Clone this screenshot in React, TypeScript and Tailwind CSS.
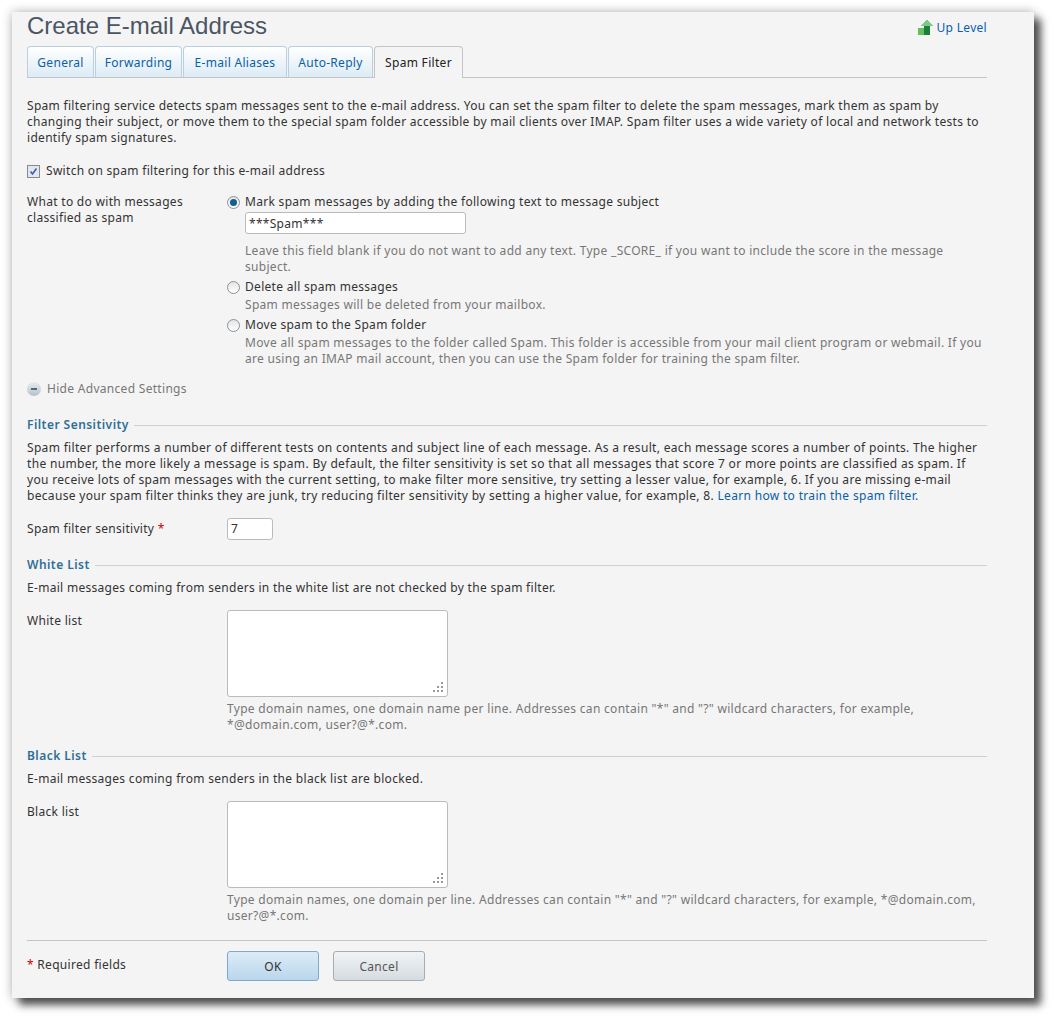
import React from "react";

const tabs = [
  { label: "General", width: "w-[67px]" },
  { label: "Forwarding", width: "w-[87px]" },
  { label: "E-mail Aliases", width: "w-[104px]" },
  { label: "Auto-Reply", width: "w-[85px]" },
];

const Section = ({ title }: { title: string }) => (
  <div className="flex items-center gap-[5px] h-4">
    <span className="font-semibold tracking-[0.45px] text-[#2f6f96]">{title}</span>
    <div className="flex-1 h-px bg-[#d0d0d0]" />
  </div>
);

const Radio = ({ checked }: { checked?: boolean }) => (
  <span className="w-[13px] h-[13px] rounded-full border border-[#8a9299] bg-gradient-to-b from-[#e4e4e4] to-white flex items-center justify-center shrink-0">
    {checked && <span className="w-[7px] h-[7px] rounded-full bg-[#0f5f8f]" />}
  </span>
);

const ListField = ({ label, help }: { label: string; help: string }) => (
  <div className="flex mt-[14px]">
    <div className="w-[200px] pt-[3px]">{label}</div>
    <div className="flex-1">
      <div className="relative w-[221px] h-[87px] bg-white border border-[#bbbbbb] rounded-[3px]">
        <svg className="absolute right-[3px] bottom-[3px]" width="11" height="11" viewBox="0 0 11 11" fill="#999">
          <rect x="8" y="0" width="2" height="2" />
          <rect x="4" y="4" width="2" height="2" />
          <rect x="8" y="4" width="2" height="2" />
          <rect x="0" y="8" width="2" height="2" />
          <rect x="4" y="8" width="2" height="2" />
          <rect x="8" y="8" width="2" height="2" />
        </svg>
      </div>
      <p className="mt-[4px] text-[#777777]">{help}</p>
    </div>
  </div>
);

export default function App() {
  return (
    <div className="bg-white w-[1054px] h-[1018px] pt-3 pl-3 font-['Noto_Sans','DejaVu_Sans',sans-serif] text-[12px] leading-4 tracking-[0.3px] text-[#333333]">
      <div className="w-[1022px] h-[986px] bg-[#f4f4f4] pl-[15px] pr-[47px] shadow-[7px_7px_8px_rgba(0,0,0,0.65),0_0_10px_rgba(0,0,0,0.3)] overflow-hidden">
        {/* Title row */}
        <div className="flex justify-between h-[34px]">
          <h1 className="font-['Liberation_Sans',sans-serif] text-[24px] leading-7 tracking-normal text-[#4b5563]">Create E-mail Address</h1>
          <a className="flex items-center gap-[3px] h-[16px] mt-[8px] text-[#0a5fb4]">
            <svg width="16" height="16" viewBox="0 0 16 16">
              <rect x="0" y="8" width="7" height="7" fill="#62c05e" />
              <path d="M9 0 L15 6 L12 6 L12 15 L6 15 L6 6 L3 6 Z" fill="#1a7f37" />
              <path d="M9 0 L15 6 L3 6 Z" fill="#7cc98a" />
            </svg>
            Up Level
          </a>
        </div>

        {/* Tabs */}
        <div className="flex items-end gap-px h-[32px] border-b border-[#c4c4c4]">
          {tabs.map((t) => (
            <div
              key={t.label}
              className={`${t.width} h-[31px] pt-px flex items-center justify-center rounded-t-[4px] border border-b-0 border-[#b9d0de] bg-gradient-to-b from-[#ffffff] to-[#dcebf5] text-[#0a5fa8]`}
            >
              {t.label}
            </div>
          ))}
          <div className="w-[89px] h-[32px] -mb-px flex items-center justify-center rounded-t-[4px] border border-b-0 border-[#c4c4c4] bg-[#f4f4f4] text-[#222222]">
            Spam Filter
          </div>
        </div>

        <p className="mt-[20px]">
          Spam filtering service detects spam messages sent to the e-mail address. You can set the spam filter to delete the spam messages, mark them as spam by changing their subject, or move them to the special spam folder accessible by mail clients over IMAP. Spam filter uses a wide variety of local and network tests to identify spam signatures.
        </p>

        <label className="flex items-center gap-[6px] mt-[17px]">
          <span className="w-[13px] h-[13px] border border-[#8a8a8a] bg-[#dfe8f2] flex items-center justify-center">
            <svg width="11" height="11" viewBox="0 0 11 11" fill="none" stroke="#4a5aa8" strokeWidth="1.6">
              <path d="M2.5 5.5 L4.5 8 L8.5 2.5" />
            </svg>
          </span>
          Switch on spam filtering for this e-mail address
        </label>

        {/* Spam action */}
        <div className="flex mt-[15px]">
          <div className="w-[200px]">What to do with messages<br />classified as spam</div>
          <div className="flex-1">
            <div className="flex items-center gap-[5px]"><Radio checked />Mark spam messages by adding the following text to message subject</div>
            <div className="ml-[18px] mt-[2px] w-[221px] h-[22px] bg-white border border-[#bbbbbb] rounded-[3px] px-[3px] leading-[22px]">***Spam***</div>
            <p className="ml-[18px] mt-[9px] text-[#777777]">Leave this field blank if you do not want to add any text. Type _SCORE_ if you want to include the score in the message subject.</p>
            <div className="flex items-center gap-[5px] mt-[4px]"><Radio />Delete all spam messages</div>
            <p className="ml-[18px] mt-[2px] text-[#777777]">Spam messages will be deleted from your mailbox.</p>
            <div className="flex items-center gap-[5px] mt-[4px]"><Radio />Move spam to the Spam folder</div>
            <p className="ml-[18px] mt-[2px] text-[#777777]">Move all spam messages to the folder called Spam. This folder is accessible from your mail client program or webmail. If you are using an IMAP mail account, then you can use the Spam folder for training the spam filter.</p>
          </div>
        </div>

        <div className="flex items-center gap-[6px] mt-[14px] text-[#777777]">
          <span className="w-[14px] h-[14px] rounded-full bg-gradient-to-b from-[#e6edf0] to-[#b4c2cb] flex items-center justify-center">
            <span className="w-[6px] h-[2px] bg-[#5a6670]" />
          </span>
          Hide Advanced Settings
        </div>

        <div className="mt-[20px]"><Section title="Filter Sensitivity" /></div>
        <p className="mt-[7px] tracking-[0.32px]">
          Spam filter performs a number of different tests on contents and subject line of each message. As a result, each message scores a number of points. The higher the number, the more likely a message is spam. By default, the filter sensitivity is set so that all messages that score 7 or more points are classified as spam. If you receive lots of spam messages with the current setting, to make filter more sensitive, try setting a lesser value, for example, 6. If you are missing e-mail because your spam filter thinks they are junk, try reducing filter sensitivity by setting a higher value, for example, 8. <a className="text-[#0a5fa8]">Learn how to train the spam filter.</a>
        </p>

        <div className="flex items-center mt-[14px]">
          <div className="w-[200px]">Spam filter sensitivity <span className="text-[#cc0000]">*</span></div>
          <div className="w-[46px] h-[22px] bg-white border border-[#bbbbbb] rounded-[3px] px-[3px] leading-5">7</div>
        </div>

        <div className="mt-[17px]"><Section title="White List" /></div>
        <p className="mt-[7px]">E-mail messages coming from senders in the white list are not checked by the spam filter.</p>
        <ListField label="White list" help={'Type domain names, one domain name per line. Addresses can contain "*" and "?" wildcard characters, for example, *@domain.com, user?@*.com.'} />

        <div className="mt-[15px]"><Section title="Black List" /></div>
        <p className="mt-[7px]">E-mail messages coming from senders in the black list are blocked.</p>
        <ListField label="Black list" help={'Type domain names, one domain per line. Addresses can contain "*" and "?" wildcard characters, for example, *@domain.com, user?@*.com.'} />

        {/* Footer */}
        <div className="h-px bg-[#c4c4c4] mt-[16px]" />
        <div className="flex mt-[10px]">
          <div className="w-[200px] pt-[6px]"><span className="text-[#cc0000]">*</span> Required fields</div>
          <button className="w-[92px] h-[30px] pt-px rounded-[3px] border border-[#7fa8cf] bg-gradient-to-b from-[#dcecf7] to-[#b9d6ec] text-[#333333]">OK</button>
          <button className="ml-[14px] w-[92px] h-[30px] pt-px rounded-[3px] border border-[#a5adb3] bg-gradient-to-b from-[#f0f3f5] to-[#d5dce1] text-[#555555]">Cancel</button>
        </div>
      </div>
    </div>
  );
}
